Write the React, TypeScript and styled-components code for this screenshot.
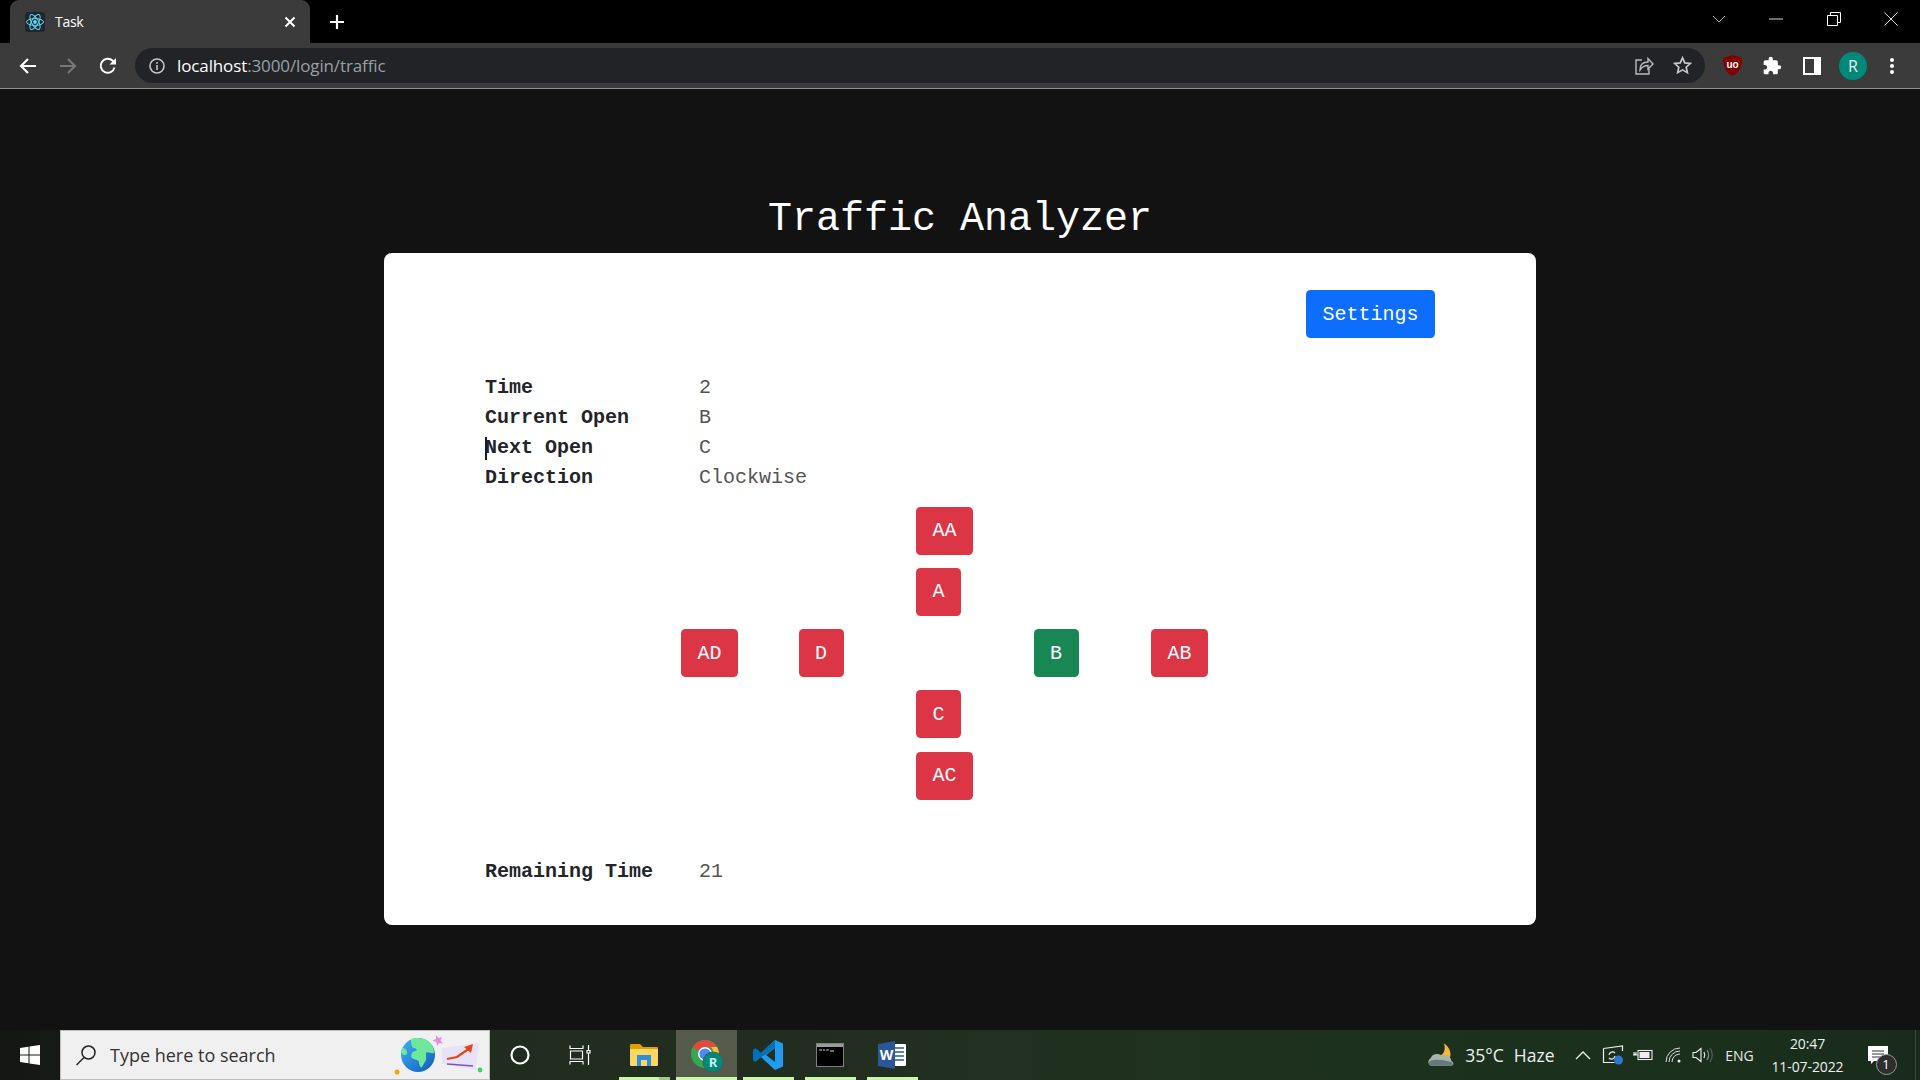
import React from "react";
import styled, { createGlobalStyle } from "styled-components";

const Global = createGlobalStyle`
  html, body { margin: 0; padding: 0; height: 100%; background: #121212; }
  #root { height: 100%; }
`;
const UI = `"Open Sans", "Noto Sans", sans-serif`;
const MONO = `"Liberation Mono", monospace`;

const Page = styled.div`
  width: 1920px; height: 1080px; display: flex; flex-direction: column; overflow: hidden; background: #121212;
`;
/* browser chrome */
const TabStrip = styled.div`
  height: 43px; background: #000; display: flex; align-items: stretch; padding-left: 10px; flex: none;
`;
const Tab = styled.div`
  width: 300px; background: #3b3b3b; border-radius: 9px 9px 0 0; display: flex; align-items: center;
  padding: 0 14px 0 15px; box-sizing: border-box; color: #fff; font: 14px ${UI}; gap: 10px; position: relative;
`;
const TabTitle = styled.span`flex: 1; letter-spacing: -0.3px;`;
const NewTab = styled.div`width: 54px; display: flex; align-items: center; justify-content: center;`;
const StripSpace = styled.div`flex: 1;`;
const WinButton = styled.div`width: 57.5px; display: flex; align-items: center; justify-content: center; padding-bottom: 6px;`;
const Toolbar = styled.div`
  height: 45px; background: #3b3b3b; border-bottom: 1px solid #8f8f8f; display: flex; align-items: center; flex: none;
  padding-left: 8px; box-sizing: content-box;
`;
const NavButton = styled.div`width: 40px; display: flex; align-items: center; justify-content: center;`;
const Omnibox = styled.div`
  width: 1570px; height: 35px; margin-left: 7px; border-radius: 18px; background: #212327; display: flex; align-items: center;
  padding: 0 9px 0 14px; box-sizing: border-box; gap: 12px;
`;
const Url = styled.div`flex: 1; font: 17px ${UI}; color: #fff; letter-spacing: -0.12px; line-height: 35px;`;
const UrlRest = styled.span`color: #9aa0a6;`;
const OmniIcon = styled.div`width: 27px; display: flex; justify-content: center; margin-left: 0;`;
const ToolIcons = styled.div`display: flex; align-items: center; margin-left: 7px;`;
const ToolIcon = styled.div`width: 40px; display: flex; justify-content: center; align-items: center;`;
const Avatar = styled.div`
  width: 28px; height: 28px; border-radius: 50%; background: #00897b; color: #e8f5f2; display: flex; align-items: center; justify-content: center;
  font: 16px ${UI}; margin-left: 2px;
`;
/* app */
const Main = styled.main`flex: 1; display: flex; flex-direction: column; align-items: center; padding-top: 105px;`;
const Title = styled.h1`
  margin: 0; height: 59px; font: 400 40px/51px ${MONO}; color: #fff;
`;
const Card = styled.section`
  width: 1152px; height: 671.5px; background: #fff; border-radius: 8px; box-sizing: border-box; padding: 37px 101px 0;
  display: flex; flex-direction: column;
`;
const CardHead = styled.div`display: flex; justify-content: flex-end; margin-bottom: 35px;`;
const Btn = styled.div<{ $tone: "blue" | "red" | "green" }>`
  height: 48px; padding: 0 16.5px; border-radius: 4.5px; display: inline-flex; align-items: center; justify-content: center;
  color: #fff; font: 20px ${MONO}; box-sizing: border-box; width: fit-content;
  background: ${(p) => (p.$tone === "blue" ? "#0d6efd" : p.$tone === "red" ? "#dc3545" : "#198754")};
`;
const Info = styled.div`display: grid; grid-template-columns: 214px 1fr; grid-auto-rows: 30px; align-items: center; font: 20px/30px ${MONO}; color: #212529;`;
const Label = styled.div`font-weight: 700; position: relative;`;
const Value = styled.div`color: #555;`;
const Caret = styled.span`position: absolute; left: 0; top: 4px; width: 2px; height: 23px; background: #1a1a2e;`;
const Junction = styled.div`
  display: grid; grid-template-columns: repeat(5, 117.5px); grid-auto-rows: 48px; row-gap: 13.25px;
  margin: 13.5px 0 0 196px;
`;
const Cell = styled.div<{ $col: number; $row: number }>`
  grid-column: ${(p) => p.$col}; grid-row: ${(p) => p.$row};
`;
const Remaining = styled(Info)`margin-top: 57px;`;
/* taskbar */
const Taskbar = styled.div`
  height: 50px; flex: none; display: flex; align-items: center; color: #fff; position: relative;
  background: linear-gradient(90deg, #141614 0, #161a16 60px, #1f2c1e 500px, #222f20 900px, #1c321e 1400px, #1a2e1c 1800px, #1a2a1b 100%);
`;
const StartSlot = styled.div`width: 60px; height: 50px; display: flex; align-items: center; justify-content: center;`;
const Search = styled.div`
  width: 430px; height: 50px; box-sizing: border-box; background: #f0f0f0; border: 1px solid #bdbdbd;
  display: flex; align-items: center; padding: 0 1px 0 14px; gap: 13px; color: #333; font: 18px ${UI}; position: relative;
`;
const SearchText = styled.span`flex: 1;`;
const TaskSlot = styled.div<{ $w: number; $active?: boolean; $run?: boolean; $split?: boolean; $nudge?: number }>`
  width: ${(p) => p.$w}px; height: 50px; display: flex; align-items: center; justify-content: center; position: relative; flex: none;
  box-sizing: border-box; padding-right: ${(p) => p.$nudge ?? 0}px;
  background: ${(p) => (p.$active ? "#565a4c" : "transparent")};
  ${(p) => p.$run && `&::after { content: ""; position: absolute; left: ${p.$active ? 0 : 6}px; right: ${p.$active ? 0 : p.$split ? 6 : 5}px; bottom: 0; height: 3px;
    background: ${p.$split ? "linear-gradient(90deg, #c9f7a6 78%, #a3c58c 78%)" : "#c9f7a6"}; }`}
`;
const Spacer = styled.div`flex: 1;`;
const Weather = styled.div`display: flex; align-items: center; font: 17.5px ${UI}; gap: 10px; color: #eee; margin-right: 13px;`;
const Tray = styled.div`display: flex; align-items: center; font: 14px ${UI}; color: #e8e8e8;`;
const TraySlot = styled.div<{ $w: number; $gap?: number }>`
  width: ${(p) => p.$w}px; margin-left: ${(p) => p.$gap ?? 0}px; display: flex; justify-content: center; align-items: center;
`;
const Clock = styled.div`width: 100px; text-align: center; font: 14px/23px ${UI}; color: #eee; letter-spacing: -0.1px;`;
const Notify = styled.div`width: 40px; height: 50px; display: flex; align-items: center; justify-content: center; position: relative;`;
const NotifyBadge = styled.span`
  position: absolute; left: 18px; top: 24px; width: 19px; height: 19px; border-radius: 50%; background: #2e2e2e; border: 1px solid #999;
  color: #fff; font: 13px/19px ${UI}; text-align: center;
`;
const EdgeLine = styled.div`width: 1px; height: 50px; background: #3a4a3a; margin-left: 17.5px; margin-right: 4px;`;

const ReactLogo = () => (
  <svg width="20" height="20" viewBox="0 0 20 20" fill="none" stroke="#61dafb" strokeWidth="1">
    <rect width="20" height="20" rx="3" fill="#20262e" stroke="none" />
    <circle cx="10" cy="10" r="1.9" fill="#61dafb" stroke="none" />
    <ellipse cx="10" cy="10" rx="8.5" ry="3.4" />
    <ellipse cx="10" cy="10" rx="8.5" ry="3.4" transform="rotate(60 10 10)" />
    <ellipse cx="10" cy="10" rx="8.5" ry="3.4" transform="rotate(120 10 10)" />
  </svg>
);
const Stroke = ({ w, h, d, c = "#fff", sw = 2 }: { w: number; h: number; d: string; c?: string; sw?: number }) => (
  <svg width={w} height={h} viewBox={`0 0 ${w} ${h}`} fill="none" stroke={c} strokeWidth={sw}><path d={d} /></svg>
);
const SearchArt = () => (
  <svg width="96" height="48" viewBox="0 0 96 48">
    <defs>
      <linearGradient id="g" x1="0" y1="0" x2="1" y2="1"><stop offset="0" stopColor="#3db6f2" /><stop offset="1" stopColor="#1557c0" /></linearGradient>
    </defs>
    <circle cx="26" cy="24" r="17" fill="url(#g)" />
    <path d="M19 8c5-2 13-1 17 2 4 3 6 8 6 12-3 1-6-2-8 0l0 7-4 7c-2 1-3-2-3-5-1-3-5-2-7-4-2-3 0-6 3-7 3 0 2-3-1-3-2 0-3-3-3-9z" fill="#6ee89a" />
    <path d="M10 17c3 0 5 2 5 5 0 2-2 2-4 2l-2-3z" fill="#6ee89a" />
    <circle cx="5" cy="41" r="2.5" fill="#f7a70a" />
    <path d="M44 4l2.500 3 3.500-1-1.500 3.500L51 12.500l-4-.5-2 3-.5-4-4-1.500 3.500-1.500z" fill="#e58ae8" />
    <path d="M50 17l37-5-3 27-34-6z" fill="#e8e2f7" />
    <path d="M55 33l26 2" stroke="#7b55b5" strokeWidth="1.4" fill="none" />
    <path d="M55 28l10-2 13-9" stroke="#e0461c" strokeWidth="2.2" fill="none" />
    <path d="M72 16l9-3-2 9z" fill="#e0461c" />
    <circle cx="88" cy="39" r="2.4" fill="#3ed46a" />
  </svg>
);
const Folder = () => (
  <svg width="28" height="24" viewBox="0 0 28 24">
    <path d="M0 2a1 1 0 0 1 1-1h9l3 3h14a1 1 0 0 1 1 1v4H0z" fill="#e0a100" />
    <path d="M0 6h27a1 1 0 0 1 1 1v15a1 1 0 0 1-1 1H1a1 1 0 0 1-1-1z" fill="#fbd663" />
    <path d="M7 12h14v11h-4v-6h-6v6H7z" fill="#2f8fd8" />
  </svg>
);
const ChromeIcon = () => (
  <svg width="36" height="36" viewBox="0 0 36 36">
    <circle cx="16" cy="17" r="14" fill="#34a853" />
    <path d="M4 10a14 14 0 0 1 24 0H16a7 7 0 0 0-6.500 4.500z" fill="#e8453c" />
    <path d="M28.100 10A14 14 0 0 1 16 31l6-10.500A7 7 0 0 0 22 10z" fill="#fbc02d" />
    <circle cx="16" cy="17" r="7" fill="#fff" />
    <circle cx="16" cy="17" r="5.600" fill="#4a8af4" />
    <circle cx="24" cy="25" r="10" fill="#00897b" stroke="#3b6158" strokeWidth="1" />
    <text x="24" y="30" textAnchor="middle" fontSize="13" fontWeight="700" fill="#cfeee8" fontFamily="Open Sans">R</text>
  </svg>
);
const VSCode = () => (
  <svg width="32" height="32" viewBox="0 0 32 32">
    <path d="M23 1L9 14 3.500 9.500 1 11v10l2.500 1.500L9 18l14 13 8-3.500V4.500zM23 9v14l-9-7z" fill="#1f9cf0" fillRule="evenodd" />
    <path d="M23 1L9 14 3.500 9.500 1 11v10l2.500 1.500L9 18l4-2L23 9z" fill="#0070bb" />
  </svg>
);
const Cmd = () => (
  <svg width="28" height="24" viewBox="0 0 28 24">
    <rect x=".5" y=".5" width="27" height="23" fill="#000" stroke="#7f7f7f" />
    <rect x="1" y="1" width="26" height="3" fill="#9a9a9a" />
    <path d="M3 7h3M7 7h2M10 7h3" stroke="#ccc" strokeWidth="1.2" />
    <path d="M14 8h4" stroke="#ddd" strokeWidth="1" />
  </svg>
);
const Word = () => (
  <svg width="28" height="28" viewBox="0 0 28 28">
    <path d="M12 3h15a1 1 0 0 1 1 1v20a1 1 0 0 1-1 1H12z" fill="#fff" />
    <path d="M17 7h9M17 11h9M17 15h9M17 19h9" stroke="#2b579a" strokeWidth="1.6" />
    <path d="M0 3l17-3v28L0 25z" fill="#2b579a" />
    <text x="8.500" y="19" textAnchor="middle" fontSize="14" fontWeight="700" fill="#fff" fontFamily="Open Sans">W</text>
  </svg>
);
const WeatherIcon = () => (
  <svg width="28" height="25" viewBox="0 0 30 26">
    <path d="M18 0c5 3 8 9 7 14-3 3-9 3-13-1 5 1 9-6 6-13z" fill="#f6b73c" />
    <path d="M5 24c-4 0-5-6-1-8 1-5 8-6 12-3 5-2 10 1 10 6 3 1 3 5 0 5z" fill="#a8b5ac" />
    <path d="M5 24c-3 0-4-3-2-5 7-3 16-1 23 1 2 1 2 4 0 4z" fill="#66797c" />
  </svg>
);
const Nav = {
  back: <Stroke w={18} h={18} d="M17 9H2M9 2L2 9l7 7" sw={2.2} />,
  fwd: <Stroke w={18} h={18} d="M1 9h15M9 2l7 7-7 7" c="#777" sw={2.2} />,
  reload: (
    <svg width="18" height="18" viewBox="0 0 18 18" fill="none"><path d="M15.500 10.500A7 7 0 1 1 13.700 3.800L16 6" stroke="#fff" strokeWidth="2" /><path d="M17 1v6.500h-6.500z" fill="#fff" /></svg>
  ),
};

const rows: [string, string][] = [["Time", "2"], ["Current Open", "B"], ["Next Open", "C"], ["Direction", "Clockwise"]];
const signals: { t: string; c: number; r: number; tone: "red" | "green" }[] = [
  { t: "AA", c: 3, r: 1, tone: "red" },
  { t: "A", c: 3, r: 2, tone: "red" },
  { t: "AD", c: 1, r: 3, tone: "red" },
  { t: "D", c: 2, r: 3, tone: "red" },
  { t: "B", c: 4, r: 3, tone: "green" },
  { t: "AB", c: 5, r: 3, tone: "red" },
  { t: "C", c: 3, r: 4, tone: "red" },
  { t: "AC", c: 3, r: 5, tone: "red" },
];

export default function App() {
  return (
    <Page>
      <Global />
      <TabStrip>
        <Tab>
          <ReactLogo />
          <TabTitle>Task</TabTitle>
          <Stroke w={12} h={12} d="M1.500 1.500l9 9M10.500 1.500l-9 9" sw={2} />
        </Tab>
        <NewTab><Stroke w={16} h={16} d="M8 1v14M1 8h14" sw={2.2} /></NewTab>
        <StripSpace />
        <WinButton><Stroke w={14} h={8} d="M1 1l6 6 6-6" c="#aaa" sw={1} /></WinButton>
        <WinButton><Stroke w={14} h={2} d="M0 1h14" c="#ddd" sw={1} /></WinButton>
        <WinButton><Stroke w={14} h={14} d="M.5 3.500h10v10H.5zM3.500 3.500V.5h10v10h-3" c="#fff" sw={1} /></WinButton>
        <WinButton><Stroke w={14} h={14} d="M.5.5l13 13M13.500.5l-13 13" c="#ddd" sw={1} /></WinButton>
      </TabStrip>
      <Toolbar>
        <NavButton>{Nav.back}</NavButton>
        <NavButton>{Nav.fwd}</NavButton>
        <NavButton>{Nav.reload}</NavButton>
        <Omnibox>
          <svg width="16" height="16" viewBox="0 0 16 16" fill="none" stroke="#c4c7c5" strokeWidth="1.6"><circle cx="8" cy="8" r="7" /><path d="M8 7v5M8 4v1.700" /></svg>
          <Url>localhost<UrlRest>:3000/login/traffic</UrlRest></Url>
          <OmniIcon>
            <svg width="20" height="20" viewBox="0 0 20 20" fill="none" stroke="#bbb" strokeWidth="1.4"><path d="M8 4H2v14h13v-5" /><path d="M6 14c0-5 3-8 8-8V2.500L19 8l-5 5V9.500c-4 0-6 1.500-8 4.500z" /></svg>
          </OmniIcon>
          <OmniIcon>
            <svg width="19" height="19" viewBox="0 0 20 20" fill="none" stroke="#c8c8c8" strokeWidth="1.8"><path d="M10 2l2.400 5.300 5.800.6-4.300 3.900 1.200 5.700L10 14.600l-5.100 2.900 1.200-5.700L1.800 7.900l5.800-.6z" /></svg>
          </OmniIcon>
        </Omnibox>
        <ToolIcons>
          <ToolIcon>
            <svg width="19" height="21" viewBox="0 0 19 21">
              <path d="M9.500 0L19 3c0 8-2 14-9.500 18C2 17 0 11 0 3z" fill="#800000" />
              <text x="9.500" y="13" textAnchor="middle" fontSize="10" fontWeight="700" fill="#fff" fontFamily="Liberation Sans">uo</text>
            </svg>
          </ToolIcon>
          <ToolIcon>
            <svg width="20" height="20" viewBox="0 0 24 24" fill="#fff"><path d="M20.500 11H19V7c0-1.100-.9-2-2-2h-4V3.500C13 2.120 11.880 1 10.500 1S8 2.120 8 3.500V5H4c-1.100 0-1.990.9-1.990 2v3.800H3.500c1.490 0 2.700 1.210 2.700 2.700s-1.210 2.700-2.700 2.700H2V20c0 1.100.9 2 2 2h3.800v-1.500c0-1.490 1.210-2.700 2.700-2.700 1.490 0 2.700 1.210 2.700 2.700V22H17c1.100 0 2-.9 2-2v-4h1.500c1.380 0 2.500-1.120 2.500-2.500S21.880 11 20.500 11z" /></svg>
          </ToolIcon>
          <ToolIcon>
            <svg width="18" height="18" viewBox="0 0 18 18"><rect x="1" y="1" width="16" height="16" fill="none" stroke="#fff" strokeWidth="2" /><rect x="11" y="1" width="6" height="16" fill="#fff" /></svg>
          </ToolIcon>
          <ToolIcon><Avatar>R</Avatar></ToolIcon>
          <ToolIcon>
            <svg width="6" height="18" viewBox="0 0 6 18" fill="#fff"><circle cx="3" cy="3" r="2" /><circle cx="3" cy="9" r="2" /><circle cx="3" cy="15" r="2" /></svg>
          </ToolIcon>
        </ToolIcons>
      </Toolbar>

      <Main>
        <Title>Traffic Analyzer</Title>
        <Card>
          <CardHead><Btn $tone="blue">Settings</Btn></CardHead>
          <Info>
            {rows.map(([k, v]) => (
              <React.Fragment key={k}>
                <Label>{k === "Next Open" && <Caret />}{k}</Label>
                <Value>{v}</Value>
              </React.Fragment>
            ))}
          </Info>
          <Junction>
            {signals.map((s) => (
              <Cell key={s.t} $col={s.c} $row={s.r}><Btn $tone={s.tone}>{s.t}</Btn></Cell>
            ))}
          </Junction>
          <Remaining>
            <Label>Remaining Time</Label>
            <Value>21</Value>
          </Remaining>
        </Card>
      </Main>

      <Taskbar>
        <StartSlot>
          <svg width="20" height="20" viewBox="0 0 20 20" fill="#fff"><path d="M0 3l8.500-1.200V9.500H0zM9.500 1.600L20 0v9.500H9.500zM0 10.500h8.500v7.700L0 17zM9.500 10.500H20V20L9.500 18.400z" /></svg>
        </StartSlot>
        <Search>
          <svg width="22" height="22" viewBox="0 0 22 22" fill="none" stroke="#222" strokeWidth="1.500"><circle cx="13.500" cy="8.500" r="6.500" /><path d="M9 13.500L1.500 21" /></svg>
          <SearchText>Type here to search</SearchText>
          <SearchArt />
        </Search>
        <TaskSlot $w={60}><svg width="20" height="20" viewBox="0 0 20 20" fill="none" stroke="#fff" strokeWidth="2.200"><circle cx="10" cy="10" r="8.500" /></svg></TaskSlot>
        <TaskSlot $w={63} $nudge={4}>
          <Stroke w={22} h={20} d="M1 .5v3h13v-3M1.500 6h12v8h-12zM1 19.500v-3h13v3M19.500 0v5M19.500 8v12M18 5.500h3v2.500h-3z" sw={1.200} />
        </TaskSlot>
        <TaskSlot $w={63} $run $split $nudge={2}><Folder /></TaskSlot>
        <TaskSlot $w={61} $active $run><ChromeIcon /></TaskSlot>
        <TaskSlot $w={62} $run><VSCode /></TaskSlot>
        <TaskSlot $w={62} $run><Cmd /></TaskSlot>
        <TaskSlot $w={62} $run><Word /></TaskSlot>
        <Spacer />
        <Weather><WeatherIcon /><span>35°C</span><span>Haze</span></Weather>
        <Tray>
          <TraySlot $w={30}><Stroke w={16} h={9} d="M1 8l7-7 7 7" c="#eee" sw={1.400} /></TraySlot>
          <TraySlot $w={30}>
            <svg width="22" height="20" viewBox="0 0 22 20" fill="none" stroke="#eee" strokeWidth="1.200"><path d="M1.500 3.500l19-2.500v5M1.500 3.500v14h11" /><path d="M7 10a3.500 3.500 0 0 1 6-2M13 11a3.500 3.500 0 0 1-6 2" /><circle cx="16.500" cy="15" r="4.500" fill="#2f76d2" stroke="none" /></svg>
          </TraySlot>
          <TraySlot $w={30}>
            <svg width="20" height="12" viewBox="0 0 20 12" fill="none" stroke="#eee" strokeWidth="1.100"><rect x="5" y="1.500" width="14" height="9" /><rect x="6.500" y="3" width="10" height="6" fill="#eee" stroke="none" /><path d="M0 6h5M1 3v2h2V3" /></svg>
          </TraySlot>
          <TraySlot $w={30}>
            <svg width="16" height="16" viewBox="0 0 16 16" fill="none" stroke="#ddd" strokeWidth="1"><path d="M1 15A14 14 0 0 1 15 1M4 15A11 11 0 0 1 15 4M7 15a8 8 0 0 1 8-8" /><circle cx="14" cy="14" r="1.500" fill="#eee" stroke="none" /></svg>
          </TraySlot>
          <TraySlot $w={30}>
            <svg width="21" height="16" viewBox="0 0 21 16" fill="none" stroke="#eee" strokeWidth="1.100"><path d="M1 5.500h3L9 1.500v13l-5-4H1z" /><path d="M12 5c1 2 1 4 0 6" /><path d="M15 3c2 3 2 7 0 10" stroke="#8a9a8a" /><path d="M18 1c3 4 3 10 0 14" stroke="#556655" /></svg>
          </TraySlot>
          <TraySlot $w={36} $gap={4}>ENG</TraySlot>
          <Clock>20:47<br />11-07-2022</Clock>
          <Notify>
            <svg width="20" height="18" viewBox="0 0 20 18"><path d="M0 0h20v15H6l-3 3v-3H0z" fill="#fff" /><path d="M4 5h12M4 8h12M4 11h9" stroke="#333" strokeWidth="1" /></svg>
            <NotifyBadge>1</NotifyBadge>
          </Notify>
          <EdgeLine />
        </Tray>
      </Taskbar>
    </Page>
  );
}
